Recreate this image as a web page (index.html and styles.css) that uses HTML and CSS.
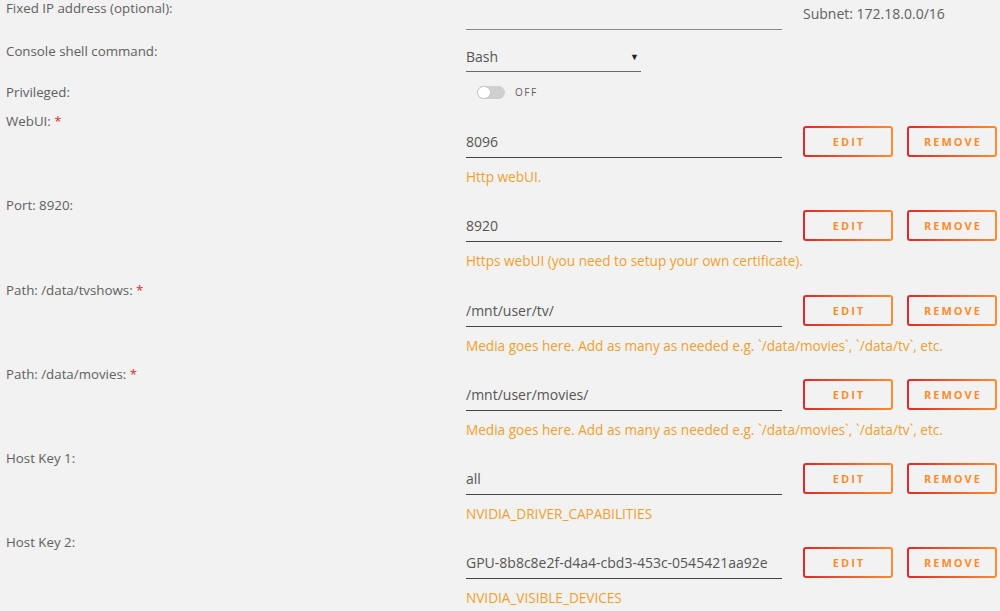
FILE: index.html
```html
<!DOCTYPE html>
<html lang="en">
<head>
    <meta charset="UTF-8">
    <meta name="viewport" content="width=device-width, initial-scale=1.0">
    <title>Update Container</title>
    <link rel="stylesheet" href="styles.css">
</head>
<body>

<div class="form">
    <div class="row row-ip">
        <label class="lbl" for="fixedIp">Fixed IP address (optional):</label>
        <div class="ctrl ctrl-inline">
            <input type="text" id="fixedIp" class="text-input empty" value="">
            <span class="note">Subnet: 172.18.0.0/16</span>
        </div>
    </div>

    <div class="row row-shell">
        <label class="lbl" for="shell">Console shell command:</label>
        <div class="ctrl">
            <div class="select-box" id="shell">
                <span>Bash</span>
                <span class="caret">&#9660;</span>
            </div>
        </div>
    </div>

    <div class="row row-priv">
        <label class="lbl">Privileged:</label>
        <div class="ctrl ctrl-switch">
            <span class="switch"><span class="knob"></span></span>
            <span class="switch-text">OFF</span>
        </div>
    </div>

    <div class="row config">
        <label class="lbl">WebUI: <span class="req">*</span></label>
        <div class="ctrl">
            <div class="field-line">
                <input type="text" class="text-input" value="8096">
                <button class="btn">Edit</button>
                <button class="btn">Remove</button>
            </div>
            <div class="help">Http webUI.</div>
        </div>
    </div>

    <div class="row config">
        <label class="lbl">Port: 8920:</label>
        <div class="ctrl">
            <div class="field-line">
                <input type="text" class="text-input" value="8920">
                <button class="btn">Edit</button>
                <button class="btn">Remove</button>
            </div>
            <div class="help">Https webUI (you need to setup your own certificate).</div>
        </div>
    </div>

    <div class="row config">
        <label class="lbl">Path: /data/tvshows: <span class="req">*</span></label>
        <div class="ctrl">
            <div class="field-line">
                <input type="text" class="text-input" value="/mnt/user/tv/">
                <button class="btn">Edit</button>
                <button class="btn">Remove</button>
            </div>
            <div class="help">Media goes here. Add as many as needed e.g. `/data/movies`, `/data/tv`, etc.</div>
        </div>
    </div>

    <div class="row config">
        <label class="lbl">Path: /data/movies: <span class="req">*</span></label>
        <div class="ctrl">
            <div class="field-line">
                <input type="text" class="text-input" value="/mnt/user/movies/">
                <button class="btn">Edit</button>
                <button class="btn">Remove</button>
            </div>
            <div class="help">Media goes here. Add as many as needed e.g. `/data/movies`, `/data/tv`, etc.</div>
        </div>
    </div>

    <div class="row config">
        <label class="lbl">Host Key 1:</label>
        <div class="ctrl">
            <div class="field-line">
                <input type="text" class="text-input" value="all">
                <button class="btn">Edit</button>
                <button class="btn">Remove</button>
            </div>
            <div class="help">NVIDIA_DRIVER_CAPABILITIES</div>
        </div>
    </div>

    <div class="row config">
        <label class="lbl">Host Key 2:</label>
        <div class="ctrl">
            <div class="field-line">
                <input type="text" class="text-input" value="GPU-8b8c8e2f-d4a4-cbd3-453c-0545421aa92e">
                <button class="btn">Edit</button>
                <button class="btn">Remove</button>
            </div>
            <div class="help">NVIDIA_VISIBLE_DEVICES</div>
        </div>
    </div>
</div>

</body>
</html>
```

FILE: styles.css
```css
body {
    font-family: 'Open Sans', 'Liberation Sans', sans-serif;
    background-color: #f2f2f2;
    color: #606060;
    margin: 0;
    padding: 0;
    overflow: hidden;
}

.form {
    padding-left: 6px;
}

.row {
    display: grid;
    grid-template-columns: 460px 1fr;
    align-items: start;
}

.lbl {
    font-size: 13.3px;
    line-height: 16px;
    color: #606060;
}

.req {
    color: #e22828;
}

.row-ip {
    height: 43px;
}

.row-shell {
    height: 41px;
}

.row-priv {
    height: 29px;
}

.config {
    height: 84.3px;
}

.config .ctrl {
    padding-top: 13px;
}

.ctrl-inline {
    display: flex;
    align-items: flex-start;
    gap: 21px;
}

.text-input {
    width: 316px;
    height: 32px;
    box-sizing: border-box;
    margin: 0;
    padding: 0;
    border: none;
    border-bottom: 1px solid #444;
    background: transparent;
    font-family: 'Open Sans', 'Liberation Sans', sans-serif;
    font-size: 14px;
    color: #555;
    outline: none;
}

.text-input.empty {
    height: 30px;
    border-bottom-color: #8a8a8a;
}

.note {
    font-size: 14px;
    line-height: 16px;
    margin-top: 6px;
    color: #606060;
}

.select-box {
    width: 175px;
    height: 29px;
    box-sizing: border-box;
    border-bottom: 1px solid #6a6a6a;
    display: flex;
    align-items: center;
    justify-content: space-between;
    font-size: 14px;
    color: #555;
    padding-right: 2px;
    padding-bottom: 2px;
}

.caret {
    font-size: 9px;
    color: #222;
}

.ctrl-switch {
    display: flex;
    align-items: center;
    height: 16px;
    padding-left: 11px;
    gap: 10px;
}

.switch {
    position: relative;
    width: 28px;
    height: 13px;
    border-radius: 7px;
    background-color: #cfcfcf;
    box-sizing: border-box;
}

.knob {
    position: absolute;
    left: 0;
    top: 0;
    width: 14px;
    height: 13px;
    border-radius: 7px;
    background-color: #fff;
    border: 1px solid #c4c4c4;
    box-sizing: border-box;
}

.switch-text {
    font-size: 10px;
    letter-spacing: 1.5px;
    color: #606060;
}

.field-line {
    display: flex;
    align-items: flex-start;
}

.btn {
    width: 90px;
    height: 31px;
    margin: 0 0 0 14px;
    padding: 0 0 0 2px;
    border: 2px solid transparent;
    border-radius: 3px;
    background: linear-gradient(#f2f2f2, #f2f2f2) padding-box,
                linear-gradient(90deg, #e22828, #ff8c2f) border-box;
    color: #ff8c2f;
    font-family: 'Open Sans', 'Liberation Sans', sans-serif;
    font-size: 11px;
    font-weight: bold;
    letter-spacing: 2px;
    text-transform: uppercase;
    cursor: pointer;
}

.field-line .text-input + .btn {
    margin-left: 21px;
}

.help {
    margin-top: 11px;
    font-size: 13.6px;
    line-height: 16px;
    color: #f0a030;
}
```
